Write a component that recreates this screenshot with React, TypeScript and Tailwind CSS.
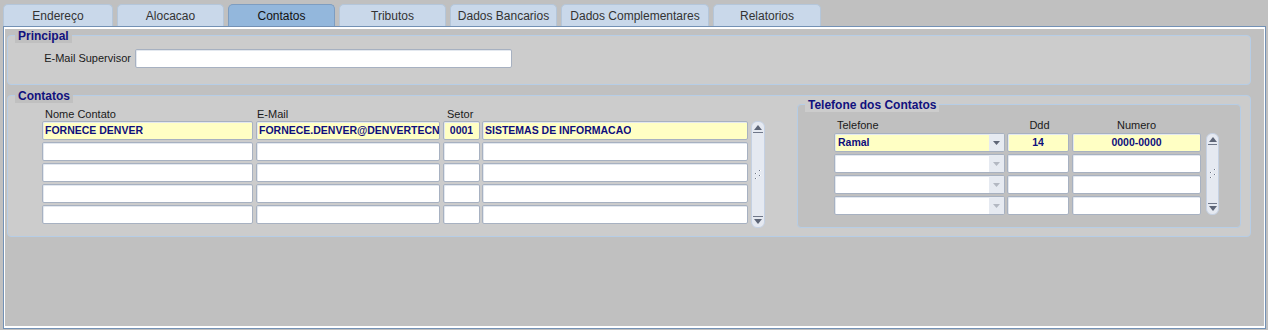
import React from "react";

const tabs = [
  { label: "Endereço", w: "w-[110px]" },
  { label: "Alocacao", w: "w-[107px]" },
  { label: "Contatos", w: "w-[107px]", active: true },
  { label: "Tributos", w: "w-[107px]" },
  { label: "Dados Bancarios", w: "w-[107px]" },
  { label: "Dados Complementares", w: "w-[148px]" },
  { label: "Relatorios", w: "w-[108px]" },
];

function Field({
  w,
  value,
  yellow,
  center,
}: {
  w: string;
  value?: string;
  yellow?: boolean;
  center?: boolean;
}) {
  return (
    <div
      className={`${w} h-[19px] shrink-0 relative overflow-hidden rounded-[2px] border border-[#a7b1c1] shadow-[inset_1px_1px_0_#e3e8ef] ${
        yellow ? "bg-[#ffffc4]" : "bg-white"
      } flex items-center ${center ? "justify-center" : "pl-[2px]"}`}
    >
      {value && (
        <span
          className={`block max-w-full overflow-hidden whitespace-nowrap text-[10.5px] font-bold text-[#0e0e7c] leading-[17px] ${
            center ? "text-center" : ""
          }`}
        >
          {value}
        </span>
      )}
    </div>
  );
}

function Combo({ value, active }: { value?: string; active?: boolean }) {
  return (
    <div
      className={`w-[171px] h-[19px] shrink-0 relative overflow-hidden rounded-[2px] border border-[#a7b1c1] shadow-[inset_1px_1px_0_#e3e8ef] ${
        active ? "bg-[#ffffc4]" : "bg-white"
      } flex items-center`}
    >
      <span className="pl-[3px] flex-1 text-[10.5px] font-bold text-[#0e0e7c] leading-[17px]">
        {value}
      </span>
      <div className="w-[15px] h-full bg-[#e6eaf1] flex items-center justify-center">
        <svg width="7" height="4" viewBox="0 0 7 4">
          <path d="M0 0 L7 0 L3.5 4 Z" fill={active ? "#5f6676" : "#b3b8c2"} />
        </svg>
      </div>
    </div>
  );
}

function ScrollBar({ h, w }: { h: string; w: string }) {
  return (
    <div
      className={`${w} ${h} shrink-0 rounded-[6px] border border-[#c5d1e3] bg-[#e5e9f1] flex flex-col items-center justify-between py-[3px]`}
    >
      <div className="flex flex-col items-center w-full px-[1px]">
        <svg width="8" height="5" viewBox="0 0 8 5">
          <path d="M0 5 L8 5 L4 0 Z" fill="#5d6577" />
        </svg>
        <div className="mt-[2px] h-[1px] w-full bg-[#6f7789]" />
      </div>
      <svg width="8" height="10" viewBox="0 0 8 10">
        <rect x="5" y="0" width="1" height="1" fill="#6f7789" />
        <rect x="6" y="0" width="1" height="1" fill="#ffffff" />
        <rect x="1" y="3" width="1" height="1" fill="#6f7789" />
        <rect x="2" y="3" width="1" height="1" fill="#ffffff" />
        <rect x="5" y="5" width="1" height="1" fill="#6f7789" />
        <rect x="6" y="5" width="1" height="1" fill="#ffffff" />
        <rect x="1" y="8" width="1" height="1" fill="#6f7789" />
        <rect x="2" y="8" width="1" height="1" fill="#ffffff" />
      </svg>
      <div className="flex flex-col items-center w-full px-[1px]">
        <div className="mb-[2px] h-[1px] w-full bg-[#6f7789]" />
        <svg width="8" height="5" viewBox="0 0 8 5">
          <path d="M0 0 L8 0 L4 5 Z" fill="#5d6577" />
        </svg>
      </div>
    </div>
  );
}

export default function App() {
  const contatoRows = [
    {
      nome: "FORNECE DENVER",
      email: "FORNECE.DENVER@DENVERTECNOLOGIA.COM.BR",
      setor: "0001",
      desc: "SISTEMAS DE INFORMACAO",
      yellow: true,
    },
    {},
    {},
    {},
    {},
  ] as Array<{ nome?: string; email?: string; setor?: string; desc?: string; yellow?: boolean }>;

  const telRows = [
    { tipo: "Ramal", ddd: "14", num: "0000-0000", active: true },
    {},
    {},
    {},
  ] as Array<{ tipo?: string; ddd?: string; num?: string; active?: boolean }>;

  return (
    <div className="w-[1268px] h-[330px] bg-[#c0c0c0] overflow-hidden font-['Liberation_Sans',Arial,sans-serif]">
      {/* Tabs */}
      <div className="flex gap-[4px] pl-[3px] pt-[4px] h-[26px]">
        {tabs.map((t) => (
          <div
            key={t.label}
            className={`${t.w} h-[22px] rounded-t-[5px] border border-b-0 ${
              t.active
                ? "bg-[#93b7dc] border-[#7d9dc1] text-[#111]"
                : "bg-[#c9d8ea] border-[#b4c6da] text-[#333]"
            } flex items-center justify-center text-[12px] leading-[14px]`}
          >
            {t.label}
          </div>
        ))}
      </div>

      {/* Panel */}
      <div className="ml-[3px] w-[1263px] h-[303px] border border-[#7391b5]">
        <div className="h-full border-t-2 border-l border-r border-b-2 border-white bg-[#c0c0c0] pt-[6px]">
          {/* Principal */}
          <div className="ml-[2px] w-[1244px] h-[50px] relative rounded-[4px] border border-[#b6cde6] bg-[#cccccc]">
            <div className="absolute left-[7px] top-[-6px] px-[3px] h-[13px] leading-[13px] bg-[#c0c0c0] text-[12px] font-bold text-[#11117e]">
              Principal
            </div>
            <div className="flex items-center pt-[13px]">
              <div className="w-[123px] text-right text-[11px] leading-[13px] text-[#1a1a1a]">
                E-Mail Supervisor
              </div>
              <div className="ml-[4px]">
                <Field w="w-[377px]" />
              </div>
            </div>
          </div>

          {/* Contatos */}
          <div className="mt-[10px] ml-[2px] w-[1244px] h-[142px] relative rounded-[4px] border border-[#b6cde6] bg-[#cccccc]">
            <div className="absolute left-[7px] top-[-6px] px-[3px] h-[13px] leading-[13px] bg-[#c0c0c0] text-[12px] font-bold text-[#11117e]">
              Contatos
            </div>
            <div className="flex items-start pl-[34px] pt-[8px]">
              {/* Left table */}
              <div className="mt-[4px]">
                <div className="flex h-[13px] text-[11px] leading-[13px] text-[#1a1a1a]">
                  <div className="w-[214px] pl-[3px]">Nome Contato</div>
                  <div className="w-[187px] pl-[1px]">E-Mail</div>
                  <div className="w-[39px] pl-[4px]">Setor</div>
                </div>
                <div className="flex">
                  <div className="flex flex-col gap-[2px]">
                    {contatoRows.map((r, i) => (
                      <div key={i} className="flex">
                        <Field w="w-[211px]" value={r.nome} yellow={r.yellow} />
                        <div className="ml-[3px]">
                          <Field w="w-[184px]" value={r.email} yellow={r.yellow} />
                        </div>
                        <div className="ml-[3px]">
                          <Field w="w-[37px]" value={r.setor} yellow={r.yellow} center />
                        </div>
                        <div className="ml-[2px]">
                          <Field w="w-[266px]" value={r.desc} yellow={r.yellow} />
                        </div>
                      </div>
                    ))}
                  </div>
                  <div className="ml-[3px]">
                    <ScrollBar w="w-[14px]" h="h-[107px]" />
                  </div>
                </div>
              </div>

              {/* Telefone dos Contatos */}
              <div className="ml-[32px] w-[444px] h-[124px] relative rounded-[4px] border border-[#b6cde6] bg-[#c0c0c0]">
                <div className="absolute left-[7px] top-[-6px] px-[3px] h-[13px] leading-[13px] bg-[#cccccc] text-[12px] font-bold text-[#11117e]">
                  Telefone dos Contatos
                </div>
                <div className="pl-[36px] pt-[14px]">
                  <div className="flex h-[14px] text-[11px] leading-[13px] text-[#1a1a1a]">
                    <div className="w-[173px] pl-[3px]">Telefone</div>
                    <div className="w-[65px] text-center">Ddd</div>
                    <div className="w-[129px] text-center">Numero</div>
                  </div>
                  <div className="flex">
                    <div className="flex flex-col gap-[2px]">
                      {telRows.map((r, i) => (
                        <div key={i} className="flex">
                          <Combo value={r.tipo} active={r.active} />
                          <div className="ml-[2px]">
                            <Field w="w-[62px]" value={r.ddd} yellow={r.active} center />
                          </div>
                          <div className="ml-[3px]">
                            <Field w="w-[129px]" value={r.num} yellow={r.active} center />
                          </div>
                        </div>
                      ))}
                    </div>
                    <div className="ml-[5px]">
                      <ScrollBar w="w-[13px]" h="h-[82px]" />
                    </div>
                  </div>
                </div>
              </div>
            </div>
          </div>
        </div>
      </div>
    </div>
  );
}
